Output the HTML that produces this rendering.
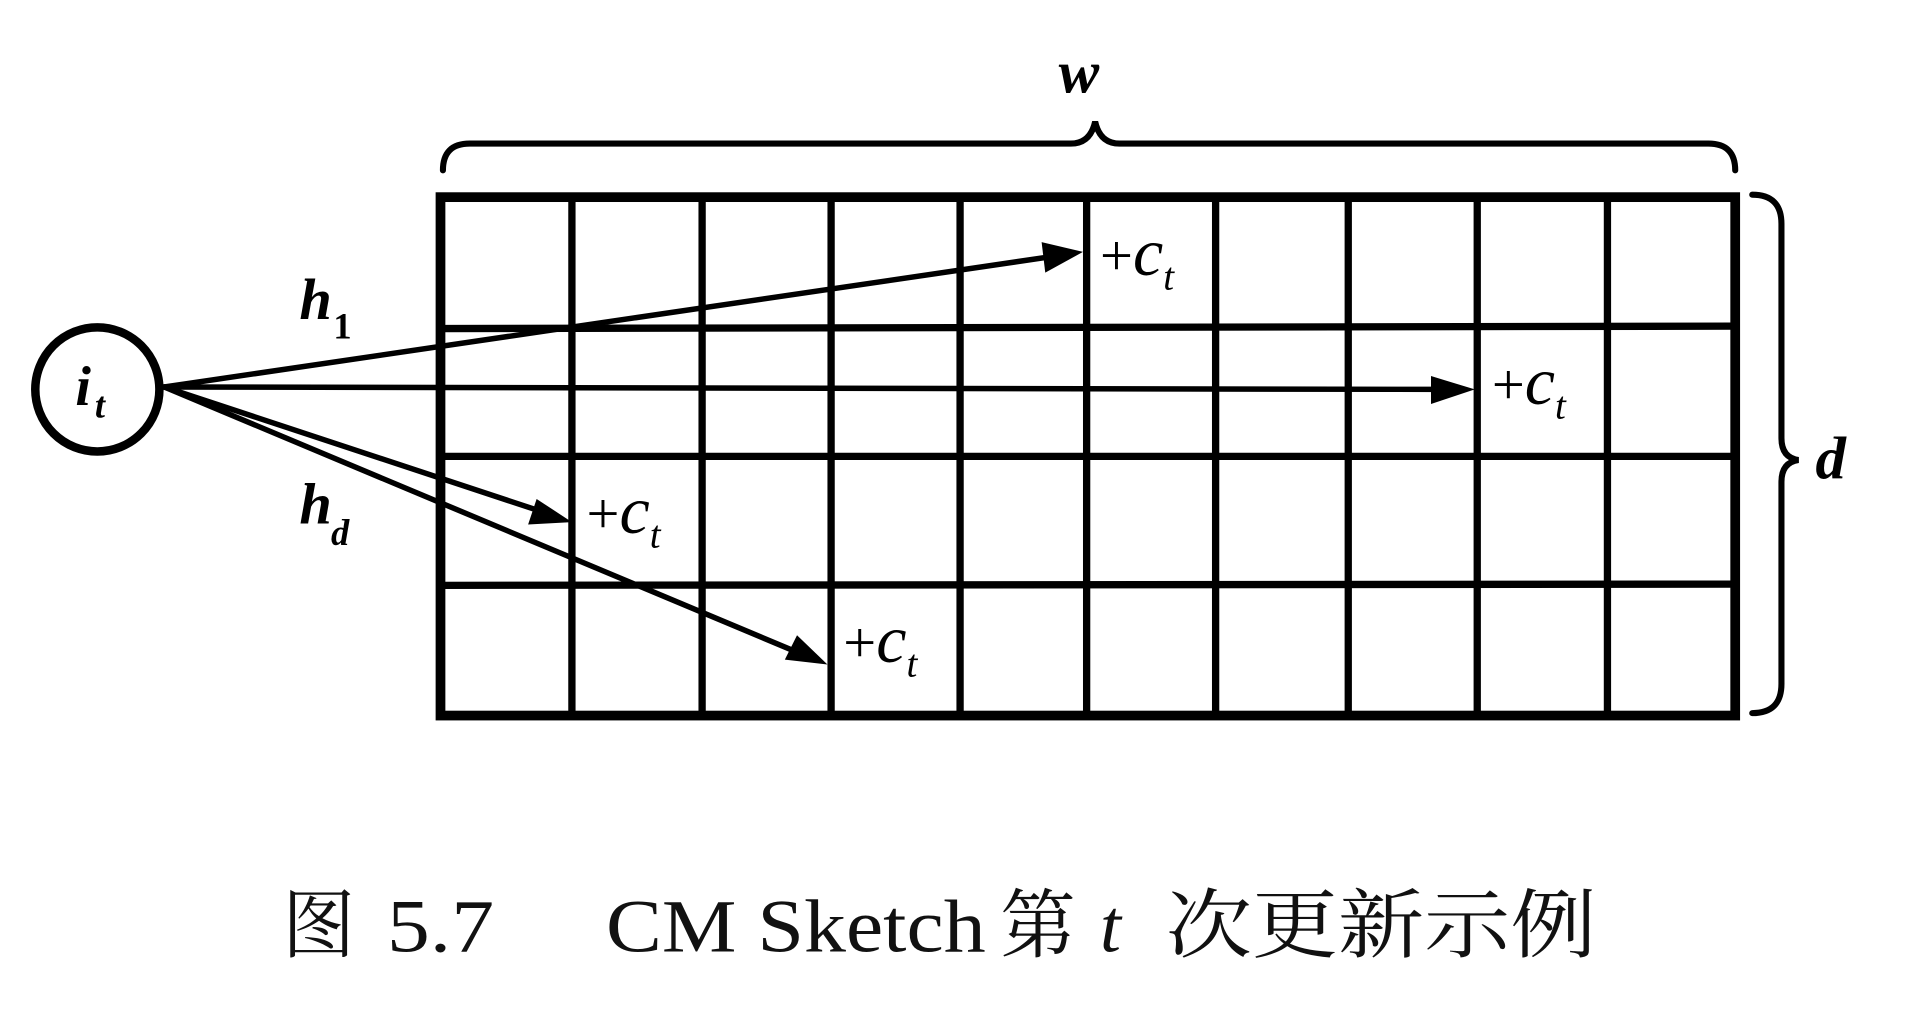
<!DOCTYPE html>
<html><head><meta charset="utf-8"><style>
html,body{margin:0;padding:0;background:#fff;}
svg{display:block;}
.it{font-family:"Liberation Serif",serif;font-style:italic;font-weight:bold;}
</style></head><body>
<svg width="1908" height="1012" viewBox="0 0 1568 831.6" preserveAspectRatio="none" xmlns="http://www.w3.org/2000/svg">
<rect width="1568" height="832" fill="#fff"/>
<g stroke="#000" fill="none" stroke-linecap="round">
<rect x="362" y="162" width="1064" height="426" stroke-width="8"/>
<g stroke-width="6">
<line x1="362" y1="270" x2="1426" y2="268"/>
<line x1="362" y1="375" x2="1426" y2="375"/>
<line x1="362" y1="481" x2="1426" y2="480"/>
<line x1="470" y1="162" x2="470" y2="588"/>
<line x1="577" y1="162" x2="577" y2="588"/>
<line x1="683" y1="162" x2="683" y2="588"/>
<line x1="789" y1="162" x2="789" y2="588"/>
<line x1="893" y1="162" x2="893" y2="588"/>
<line x1="999" y1="162" x2="999" y2="588"/>
<line x1="1108" y1="162" x2="1108" y2="588"/>
<line x1="1214" y1="162" x2="1214" y2="588"/>
<line x1="1321" y1="162" x2="1321" y2="588"/>
</g>
<circle cx="80" cy="320" r="51" stroke-width="7"/>
<path d="M364 140 Q364 118 386 118 L880 118 Q896 118 900 100 Q904 118 920 118 L1404 118 Q1426 118 1426 140" stroke-width="5"/>
<path d="M1440 160 Q1464 160 1464 184 L1464 360 Q1464 376 1478 378 Q1464 380 1464 396 L1464 562 Q1464 586 1440 586" stroke-width="5"/>
<g stroke-width="4.5">
<line x1="135" y1="318" x2="870" y2="210"/>
<line x1="135" y1="318" x2="1190" y2="320"/>
<line x1="135" y1="318" x2="450" y2="422"/>
<line x1="135" y1="318" x2="660" y2="538"/>
</g>
</g>
<g fill="#000">
<polygon points="890,207 856,199 859,224"/>
<polygon points="1212,320 1176,309 1176,332"/>
<polygon points="470,429 441,410 434,431"/>
<polygon points="680,546 655,522 645,542"/>
</g>
<g class="it" fill="#000">
<text x="870" y="76" font-size="50">w</text>
<text x="1492" y="393" font-size="50">d</text>
<text x="62" y="333" font-size="46">i</text><text x="78" y="343" font-size="30">t</text>
<text x="246" y="262" font-size="48">h</text><text x="274" y="278" font-size="30" font-style="normal">1</text>
<text x="246" y="430" font-size="48">h</text><text x="272" y="448" font-size="30">d</text>
</g>
<g font-family="Liberation Serif,serif" font-size="48" fill="#000">
<text x="904" y="226">+<tspan font-style="italic" font-size="56">c</tspan><tspan font-style="italic" font-size="32" dy="12">t</tspan></text>
<text x="1226" y="332">+<tspan font-style="italic" font-size="56">c</tspan><tspan font-style="italic" font-size="32" dy="12">t</tspan></text>
<text x="482" y="438">+<tspan font-style="italic" font-size="56">c</tspan><tspan font-style="italic" font-size="32" dy="12">t</tspan></text>
<text x="693" y="544">+<tspan font-style="italic" font-size="56">c</tspan><tspan font-style="italic" font-size="32" dy="12">t</tspan></text>
</g>
<g font-family="Liberation Serif,'Noto Serif CJK SC',serif" font-size="62" fill="#111">
<text x="232" y="782" textLength="60" lengthAdjust="spacingAndGlyphs">图</text>
<text x="318" y="782" textLength="88" lengthAdjust="spacingAndGlyphs">5.7</text>
<text x="498" y="782" textLength="312" lengthAdjust="spacingAndGlyphs">CM Sketch</text>
<text x="822" y="782" textLength="62" lengthAdjust="spacingAndGlyphs">第</text>
<text x="904" y="782" font-style="italic">t</text>
<text x="958" y="782" textLength="354" lengthAdjust="spacingAndGlyphs">次更新示例</text>
</g>
</svg>
</body></html>
